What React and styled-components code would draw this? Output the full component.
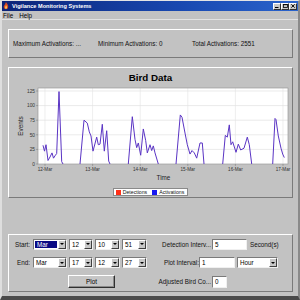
import React from "react";
import styled, { createGlobalStyle, css } from "styled-components";

const GlobalStyle = createGlobalStyle`
  html, body {
    margin: 0;
    padding: 0;
    background: #c2c2c2;
  }
  body {
    font-family: "Liberation Sans", Arial, sans-serif;
  }
`;

const raised = css`
  border-top: 1px solid #ffffff;
  border-left: 1px solid #ffffff;
  border-bottom: 1px solid #7a7a7a;
  border-right: 1px solid #7a7a7a;
`;

const sunken = css`
  border-top: 1px solid #7a7a7a;
  border-left: 1px solid #7a7a7a;
  border-bottom: 1px solid #f0f0f0;
  border-right: 1px solid #f0f0f0;
`;

const Window = styled.div`
  width: 300px;
  height: 300px;
  box-sizing: border-box;
  display: flex;
  flex-direction: column;
  background: #c2c2c2;
  border-top: 1px solid #e4e4e4;
  border-left: 2px solid #dedede;
  border-right: 2px solid #8a8a8a;
  border-bottom: 4px solid #4a4a4a;
  overflow: hidden;
`;

const TitleBar = styled.div`
  height: 10px;
  flex: none;
  display: flex;
  align-items: center;
  padding: 0 1px 0 1px;
  background: linear-gradient(90deg, #0c2478 0%, #1848b0 60%, #2a64cc 100%);
`;

const TitleText = styled.span`
  color: #ffffff;
  font-weight: bold;
  font-size: 5.6px;
  margin-left: 3px;
  flex: 1;
  white-space: nowrap;
`;

const WinButtons = styled.div`
  display: flex;
  gap: 0;
`;

const WinButton = styled.div`
  width: 8px;
  height: 7px;
  box-sizing: border-box;
  background: #c8c8c8;
  border-top: 1px solid #ffffff;
  border-left: 1px solid #ffffff;
  border-bottom: 1px solid #303030;
  border-right: 1px solid #303030;
  display: flex;
  align-items: center;
  justify-content: center;
`;

const MenuBar = styled.div`
  height: 9px;
  flex: none;
  display: flex;
  align-items: center;
  gap: 6px;
  padding-left: 1px;
  font-size: 6.3px;
  color: #000;
  border-bottom: 1px solid #e2e2e2;
  box-sizing: border-box;
`;

const Content = styled.div`
  flex: 1;
  display: flex;
  flex-direction: column;
  padding: 9px 5px 0 6px;
`;

const Panel = styled.div`
  ${raised};
  box-sizing: border-box;
  height: ${(p) => p.$h}px;
  margin-top: ${(p) => p.$mt || 0}px;
  background: #c2c2c2;
`;

const StatsRow = styled.div`
  height: 100%;
  display: grid;
  grid-template-columns: 85px 94px auto;
  align-items: center;
  padding-left: 4px;
  font-size: 6.3px;
  color: #111;
  white-space: nowrap;
`;

const ChartTitle = styled.div`
  height: 18px;
  line-height: 19px;
  text-align: center;
  font-weight: bold;
  font-size: 9.8px;
  color: #000;
`;

const PlotSvg = styled.svg`
  display: block;
  width: 283px;
  height: 88px;
`;

const AxisTitle = styled.div`
  height: 8px;
  line-height: 8px;
  text-align: center;
  font-size: 6.3px;
  color: #222;
  padding-left: 26px;
`;

const LegendRow = styled.div`
  margin-top: 6px;
  display: flex;
  justify-content: center;
`;

const LegendBox = styled.div`
  height: 8px;
  box-sizing: border-box;
  display: flex;
  align-items: center;
  gap: 2px;
  padding: 0 3px 0 2px;
  background: #ffffff;
  border: 1px solid #8a8a8a;
  font-size: 5.2px;
  color: #111;
`;

const Swatch = styled.span`
  width: 5px;
  height: 5px;
  background: ${(p) => p.$color};
  margin-left: ${(p) => p.$ml || 0}px;
`;

const Controls = styled.div`
  display: flex;
  padding-top: 3px;
`;

const Column = styled.div`
  display: grid;
  grid-template-rows: 12px 12px 13px;
  row-gap: 6.5px;
  width: ${(p) => (p.$w ? `${p.$w}px` : "auto")};
  flex: ${(p) => (p.$w ? "none" : "1")};
`;

const Row = styled.div`
  display: flex;
  align-items: center;
  gap: ${(p) => p.$gap || 0}px;
`;

const Label = styled.span`
  width: ${(p) => p.$w}px;
  flex: none;
  text-align: right;
  font-size: 6.3px;
  color: #111;
  white-space: nowrap;
  padding-right: ${(p) => p.$pr || 0}px;
  box-sizing: border-box;
`;

const Unit = styled.span`
  font-size: 6.3px;
  color: #111;
  margin-left: 3px;
`;

const ComboBox = styled.div`
  ${sunken};
  width: ${(p) => p.$w}px;
  height: 11px;
  box-sizing: border-box;
  display: flex;
  background: #ffffff;
  margin-left: ${(p) => p.$ml || 0}px;
`;

const ComboText = styled.span`
  flex: 1;
  display: flex;
  align-items: center;
  padding-left: 2px;
  font-size: 6.3px;
  color: ${(p) => (p.$selected ? "#ffffff" : "#000")};
  background: ${(p) => (p.$selected ? "#0a0a84" : "#ffffff")};
  margin: ${(p) => (p.$selected ? "1px 1px 1px 1px" : "0")};
`;

const ComboArrow = styled.span`
  width: 8px;
  flex: none;
  box-sizing: border-box;
  background: #c8c8c8;
  border-top: 1px solid #ffffff;
  border-left: 1px solid #ffffff;
  border-bottom: 1px solid #404040;
  border-right: 1px solid #404040;
  display: flex;
  align-items: center;
  justify-content: center;

  &::after {
    content: "";
    width: 0;
    height: 0;
    border-left: 2px solid transparent;
    border-right: 2px solid transparent;
    border-top: 2px solid #000;
  }
`;

const TextField = styled.div`
  ${sunken};
  width: ${(p) => p.$w}px;
  height: ${(p) => p.$h || 11}px;
  box-sizing: border-box;
  background: #ffffff;
  display: flex;
  align-items: center;
  padding-left: 2px;
  font-size: 6.3px;
  color: #000;
  margin-left: ${(p) => p.$ml || 0}px;
`;

const PlotButton = styled.button`
  width: 47px;
  height: 13px;
  margin-left: 59px;
  padding: 0;
  box-sizing: border-box;
  background: #c6c6c6;
  border-top: 1px solid #ffffff;
  border-left: 1px solid #ffffff;
  border-bottom: 1px solid #303030;
  border-right: 1px solid #303030;
  box-shadow: inset -1px -1px 0 #8a8a8a;
  font-family: "Liberation Sans", Arial, sans-serif;
  font-size: 6.3px;
  color: #000;
`;

function Combo({ w, value, selected, ml }) {
  return (
    <ComboBox $w={w} $ml={ml}>
      <ComboText $selected={selected}>{value}</ComboText>
      <ComboArrow />
    </ComboBox>
  );
}

// chart geometry (svg coords: page x - 9, page y - 86)
const PLOT = { left: 29, right: 279, top: 2, bottom: 78 };
const yOf = (v) => PLOT.bottom - v * 0.584;
const dayX = (i) => 36 + 47.6 * i;
const days = ["12-Mar", "13-Mar", "14-Mar", "15-Mar", "16-Mar", "17-Mar"];
const yTicks = [0, 25, 50, 75, 100, 125];

// activation bursts, [page x, events]
const bursts = [
  [
    [43, 32], [44.5, 22], [46, 33], [48, 6], [50, 12], [52, 19], [53.5, 10],
    [55, 14], [56.7, 18], [59, 124], [61.7, 4], [63, 0],
  ],
  [
    [80, 0], [84, 75], [87.3, 70], [89.3, 55], [91, 48], [93, 22], [96.7, 46],
    [98.3, 33], [100, 34], [102.3, 68], [104.3, 22], [106.7, 57], [108.7, 5], [110, 0],
  ],
  [
    [128.3, 0], [132.3, 81], [135, 42], [136.7, 28], [138.3, 36], [140.7, 15],
    [143.3, 60], [145.7, 40], [147.3, 19], [150, 33], [151.7, 23], [153.3, 31],
    [155, 19], [158.3, 0],
  ],
  [
    [176, 0], [180.3, 84], [182, 80], [185, 53], [187.3, 33], [190, 17], [192, 23],
    [194.3, 19], [196.7, 10], [200, 36], [202.3, 36], [204, 0],
  ],
  [
    [222.7, 0], [225.3, 49], [227.3, 46], [229.3, 67], [231, 33], [232.7, 38],
    [236, 20], [238.3, 34], [240.7, 24], [244, 27], [247.3, 46], [249.3, 33], [251.7, 0],
  ],
  [
    [272.7, 0], [275, 78], [276, 76], [278.3, 48], [281, 27], [282.7, 17], [284.3, 11],
  ],
];

function BirdChart() {
  return (
    <PlotSvg viewBox="0 0 283 88">
      <rect
        x={PLOT.left}
        y={PLOT.top}
        width={PLOT.right - PLOT.left}
        height={PLOT.bottom - PLOT.top}
        fill="#ffffff"
      />
      {yTicks.slice(1).map((v) => (
        <line
          key={v}
          x1={PLOT.left}
          x2={PLOT.right}
          y1={yOf(v)}
          y2={yOf(v)}
          stroke="#dcdcdc"
          strokeWidth="0.6"
        />
      ))}
      {days.map((d, i) => (
        <line
          key={d}
          x1={dayX(i)}
          x2={dayX(i)}
          y1={PLOT.top}
          y2={PLOT.bottom}
          stroke="#e2e2e2"
          strokeWidth="0.6"
        />
      ))}
      <rect
        x={PLOT.left}
        y={PLOT.top}
        width={PLOT.right - PLOT.left}
        height={PLOT.bottom - PLOT.top}
        fill="none"
        stroke="#9a9a9a"
        strokeWidth="0.7"
      />
      {bursts.map((pts, i) => (
        <polyline
          key={i}
          points={pts.map(([x, v]) => `${x - 9},${yOf(v)}`).join(" ")}
          fill="none"
          stroke="#5a34c4"
          strokeWidth="1"
          strokeLinejoin="round"
        />
      ))}
      {yTicks.map((v) => (
        <g key={v}>
          <line x1={PLOT.left - 2} x2={PLOT.left} y1={yOf(v)} y2={yOf(v)} stroke="#777" strokeWidth="0.5" />
          <text
            x={PLOT.left - 3}
            y={yOf(v) + 1.7}
            textAnchor="end"
            fontSize="4.8"
            fill="#333"
            fontFamily="Liberation Sans, Arial, sans-serif"
          >
            {v}
          </text>
        </g>
      ))}
      {days.map((d, i) => (
        <g key={d}>
          <line x1={dayX(i)} x2={dayX(i)} y1={PLOT.bottom} y2={PLOT.bottom + 2} stroke="#777" strokeWidth="0.5" />
          <text
            x={Math.min(dayX(i), 274)}
            y={85}
            textAnchor="middle"
            fontSize="4.6"
            fill="#333"
            fontFamily="Liberation Sans, Arial, sans-serif"
          >
            {d}
          </text>
        </g>
      ))}
      <text
        x={0}
        y={0}
        transform="translate(13.5 40) rotate(-90)"
        textAnchor="middle"
        fontSize="6.4"
        fill="#222"
        fontFamily="Liberation Sans, Arial, sans-serif"
      >
        Events
      </text>
    </PlotSvg>
  );
}

function AppIcon() {
  return (
    <svg width="6" height="8" viewBox="0 0 6 8">
      <path d="M3 0 C4 2 6 3 5 6 C4.5 7.5 1.5 7.5 1 6 C0 4 2 3 3 0 Z" fill="#d84a20" />
      <path d="M3 3 C3.8 4.3 4.3 5 3.8 6.3 C3.3 7 2.5 7 2.2 6.3 C1.9 5.4 2.6 4.5 3 3 Z" fill="#ffd060" />
    </svg>
  );
}

export default function App() {
  return (
    <React.Fragment>
      <GlobalStyle />
      <Window>
        <TitleBar>
          <AppIcon />
          <TitleText>Vigilance Monitoring Systems</TitleText>
          <WinButtons>
            <WinButton>
              <svg width="4" height="4" viewBox="0 0 4 4">
                <rect x="0" y="3" width="3.5" height="1" fill="#000" />
              </svg>
            </WinButton>
            <WinButton>
              <svg width="5" height="4" viewBox="0 0 5 4">
                <rect x="0.5" y="0.5" width="4" height="3" fill="none" stroke="#000" strokeWidth="0.8" />
                <rect x="0.5" y="0.3" width="4" height="0.8" fill="#000" />
              </svg>
            </WinButton>
            <WinButton>
              <svg width="4" height="4" viewBox="0 0 4 4">
                <path d="M0.3 0.3 L3.7 3.7 M3.7 0.3 L0.3 3.7" stroke="#000" strokeWidth="0.9" />
              </svg>
            </WinButton>
          </WinButtons>
        </TitleBar>

        <MenuBar>
          <span>File</span>
          <span>Help</span>
        </MenuBar>

        <Content>
          <Panel $h={29}>
            <StatsRow>
              <span>Maximum Activations: ...</span>
              <span>Minimum Activations: 0</span>
              <span>Total Activations: 2551</span>
            </StatsRow>
          </Panel>

          <Panel $h={131} $mt={9}>
            <ChartTitle>Bird Data</ChartTitle>
            <BirdChart />
            <AxisTitle>Time</AxisTitle>
            <LegendRow>
              <LegendBox>
                <Swatch $color="#ff3018" />
                <span>Detections</span>
                <Swatch $color="#1818f0" $ml={3} />
                <span>Activations</span>
              </LegendBox>
            </LegendRow>
          </Panel>

          <Panel $h={58} $mt={36}>
            <Controls>
              <Column $w={146}>
                <Row $gap={2}>
                  <Label $w={22} $pr={1}>Start:</Label>
                  <Combo w={34} value="Mar" selected />
                  <Combo w={24} value="12" />
                  <Combo w={25} value="10" />
                  <Combo w={25} value="51" />
                </Row>
                <Row $gap={2}>
                  <Label $w={22} $pr={1}>End:</Label>
                  <Combo w={34} value="Mar" />
                  <Combo w={24} value="17" />
                  <Combo w={25} value="12" />
                  <Combo w={25} value="27" />
                </Row>
                <Row>
                  <PlotButton>Plot</PlotButton>
                </Row>
              </Column>
              <Column>
                <Row>
                  <Label $w={56}>Detection Interv...</Label>
                  <TextField $w={35} $ml={1}>5</TextField>
                  <Unit>Second(s)</Unit>
                </Row>
                <Row>
                  <Label $w={44}>Plot Interval:</Label>
                  <TextField $w={36}>1</TextField>
                  <Combo w={41} value="Hour" ml={2} />
                </Row>
                <Row>
                  <Label $w={56}>Adjusted Bird Co...</Label>
                  <TextField $w={15} $h={12} $ml={1}>0</TextField>
                </Row>
              </Column>
            </Controls>
          </Panel>
        </Content>
      </Window>
    </React.Fragment>
  );
}
